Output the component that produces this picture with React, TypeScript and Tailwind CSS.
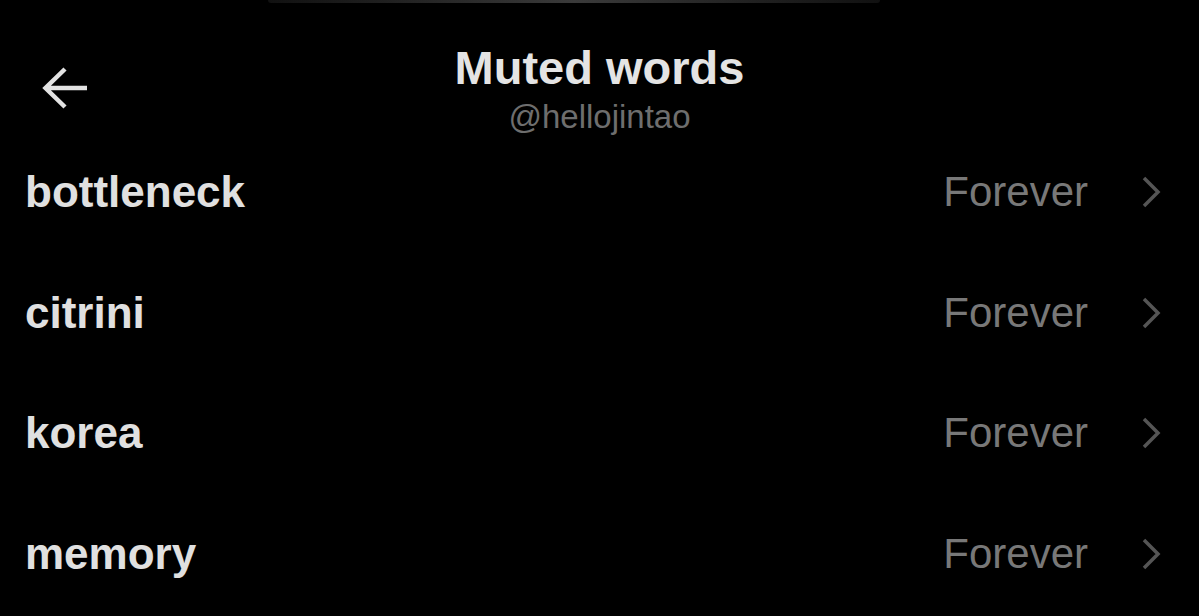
const words = ["bottleneck", "citrini", "korea", "memory"];

function BackArrow() {
  return (
    <svg width="50" height="44" viewBox="0 0 50 44" fill="none">
      <path
        d="M47 22H5M25 3L5.5 22L25 41"
        stroke="#e2e2e2"
        strokeWidth="4.5"
        strokeLinejoin="miter"
      />
    </svg>
  );
}

function Chevron() {
  return (
    <svg width="22" height="32" viewBox="0 0 22 32" fill="none">
      <path d="M3 2L17 16L3 30" stroke="#555555" strokeWidth="3.5" />
    </svg>
  );
}

function MutedRow({ word }: { word: string }) {
  return (
    <div className="flex h-[120.5px] items-center justify-between pl-[25px] pr-[36px]">
      <span className="text-[44px] font-bold leading-none text-[#e0e0e0]">
        {word}
      </span>
      <div className="flex items-center gap-[53px]">
        <span className="text-[42px] leading-none text-[#787878]">Forever</span>
        <Chevron />
      </div>
    </div>
  );
}

export default function App() {
  return (
    <div
      className="h-[616px] w-full overflow-hidden bg-black"
      style={{ fontFamily: '"Liberation Sans", Arial, sans-serif' }}
    >
      <div className="ml-[268px] h-[3px] w-[612px] rounded-b-full bg-gradient-to-r from-[#111111] via-[#3a3a3a] to-[#111111]" />
      <header className="grid h-[129px] grid-cols-[1fr_auto_1fr]">
        <div className="pl-[40px] pt-[63px]">
          <BackArrow />
        </div>
        <div className="flex flex-col items-center pt-[41px]">
          <h1 className="text-[47px] font-bold leading-none text-[#e4e4e4]">
            Muted words
          </h1>
          <p className="mt-[9px] text-[33px] leading-none text-[#6e6e6e]">
            @hellojintao
          </p>
        </div>
        <div />
      </header>
      <div className="flex flex-col">
        {words.map((w) => (
          <MutedRow key={w} word={w} />
        ))}
      </div>
    </div>
  );
}
